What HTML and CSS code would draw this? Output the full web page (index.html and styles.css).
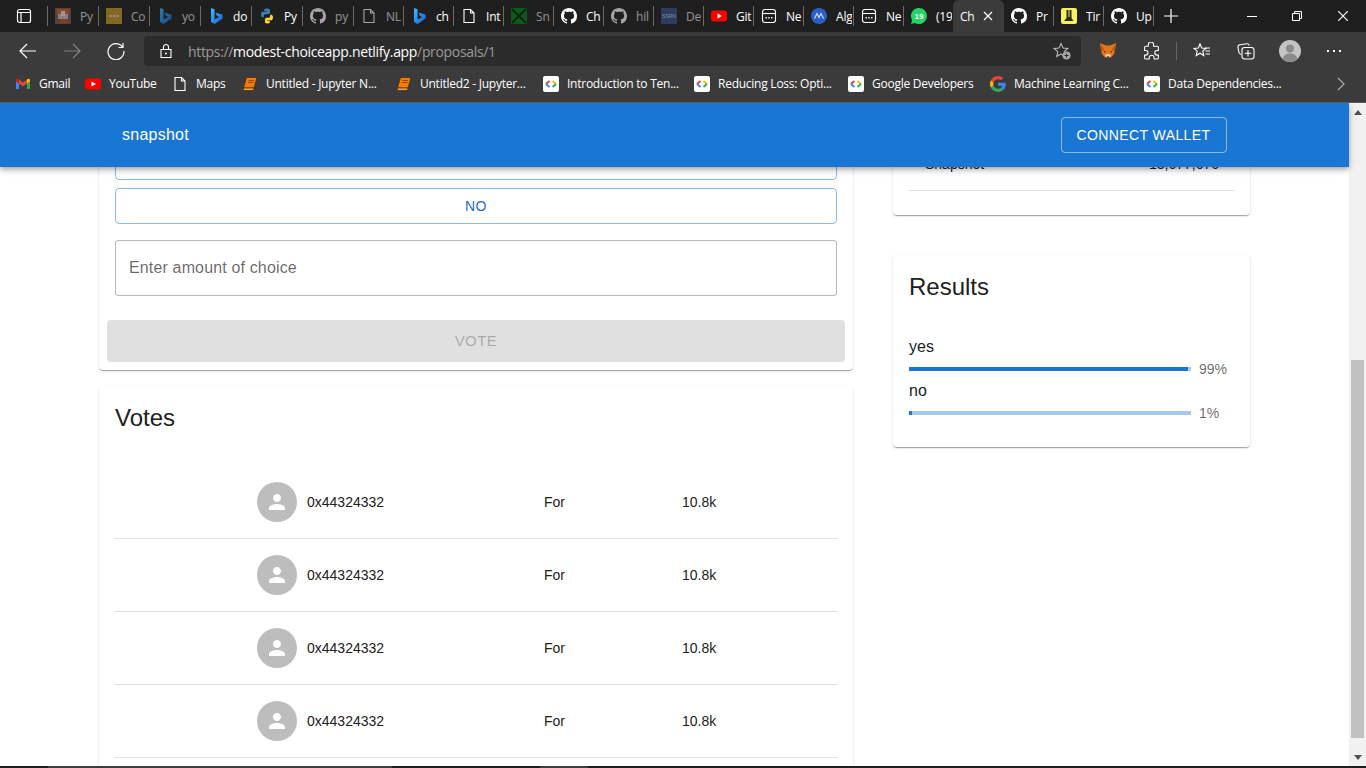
FILE: index.html
```html
<!DOCTYPE html>
<html lang="en">
<head>
    <meta charset="UTF-8">
    <meta name="viewport" content="width=device-width, initial-scale=1.0">
    <title>snapshot</title>
    <link rel="stylesheet" href="styles.css">
</head>
<body>
    <svg class="defs" aria-hidden="true">
        <linearGradient id="bing-fill" x1="0" y1="0" x2="1" y2="1">
            <stop offset="0" stop-color="#37bdff"/>
            <stop offset="1" stop-color="#1b5fd8"/>
        </linearGradient>
        <symbol id="i-github" viewBox="0 0 16 16">
            <path fill="#fff" d="M8 0C3.58 0 0 3.58 0 8c0 3.54 2.29 6.53 5.47 7.59.4.07.55-.17.55-.38 0-.19-.01-.82-.01-1.49-2.01.37-2.53-.49-2.69-.94-.09-.23-.48-.94-.82-1.13-.28-.15-.68-.52-.01-.53.63-.01 1.08.58 1.23.82.72 1.21 1.87.87 2.33.66.07-.52.28-.87.51-1.07-1.78-.2-3.64-.89-3.64-3.95 0-.87.31-1.59.82-2.15-.08-.2-.36-1.02.08-2.12 0 0 .67-.21 2.2.82.64-.18 1.32-.27 2-.27.68 0 1.36.09 2 .27 1.53-1.04 2.2-.82 2.2-.82.44 1.1.16 1.92.08 2.12.51.56.82 1.27.82 2.15 0 3.07-1.87 3.75-3.65 3.95.29.25.54.73.54 1.48 0 1.07-.01 1.93-.01 2.2 0 .21.15.46.55.38A8.013 8.013 0 0016 8c0-4.42-3.58-8-8-8z"/>
        </symbol>
        <symbol id="i-bing" viewBox="0 0 16 16">
            <path fill="url(#bing-fill)" d="M3 0l3.6 1.3v10.2l4.6-2.6-2.2-1-1.4-3.5 7 2.4v3.8L6.6 16 3 14z"/>
        </symbol>
        <symbol id="i-doc" viewBox="0 0 16 16">
            <path fill="none" stroke="#fff" stroke-width="1.1" d="M3 1.5h6.5L13 5v9.5H3zM9.5 1.5V5H13"/>
        </symbol>
        <symbol id="i-page" viewBox="0 0 16 16">
            <rect x="1.5" y="1.5" width="13" height="13" rx="2.5" fill="none" stroke="#fff" stroke-width="1.1"/>
            <path stroke="#fff" stroke-width="1.1" d="M1.5 5.5h13"/>
            <path fill="#fff" d="M4.5 9h1.4v1.4H4.5zM7.3 9h1.4v1.4H7.3zM10.1 9h1.4v1.4h-1.4z"/>
        </symbol>
        <symbol id="i-dev" viewBox="0 0 16 16">
            <rect width="16" height="16" rx="2" fill="#fff"/>
            <path fill="none" stroke="#ea4335" stroke-width="2" d="M6.5 5 3 8"/>
            <path fill="none" stroke="#4285f4" stroke-width="2" d="M3 8l3.5 3"/>
            <path fill="none" stroke="#fbbc04" stroke-width="2" d="M9.5 5 13 8"/>
            <path fill="none" stroke="#34a853" stroke-width="2" d="M13 8l-3.5 3"/>
        </symbol>
        <symbol id="i-book" viewBox="0 0 16 16">
            <path fill="#f57c00" stroke="#3b2a12" stroke-width=".7" d="M4.500 1.500H15L12 12H1.500z"/>
            <path fill="#f9a13a" stroke="#3b2a12" stroke-width=".7" d="M1.500 12H12l-.6 2.500H2.200c-1 0-1-1.500-.7-2.500z"/>
            <path stroke="#7a3d00" stroke-width=".8" d="M6.500 4.500h5.500M6 6.500h5.500"/>
        </symbol>
        <symbol id="i-person" viewBox="0 0 24 24">
            <path fill="#fff" d="M12 12c2.210 0 4-1.790 4-4s-1.790-4-4-4-4 1.790-4 4 1.790 4 4 4zm0 2c-2.670 0-8 1.340-8 4v2h16v-2c0-2.660-5.330-4-8-4z"/>
        </symbol>
    </svg>

    <div class="browser">
        <div class="tabstrip">
            <div class="tab-menu">
                <svg class="icon" viewBox="0 0 16 16"><rect x="1.500" y="1.500" width="13" height="13" rx="2" fill="none" stroke="#fff" stroke-width="1.200"/><path stroke="#fff" stroke-width="1.200" d="M1.500 4.500h13M5 4.500v10"/></svg>
            </div>
            <div class="tab wide dim">
                <svg class="icon" viewBox="0 0 16 16"><rect width="16" height="16" fill="#7a5c4e"/><rect x="2" y="1" width="12" height="5" fill="#d8603c"/><rect x="3" y="6" width="10" height="5" fill="#cfc2b8"/><rect x="5" y="11" width="7" height="4" fill="#c4532f"/><rect x="6" y="3" width="4" height="5" fill="#f2e6d8"/></svg>
                <span class="tab-text">Py</span>
            </div>
            <div class="tab wide dim">
                <svg class="icon" viewBox="0 0 16 16"><rect width="16" height="16" fill="#c69a24"/><path fill="#fff" d="M3.500 7.200h2v1.600h-2zM7 7.200h2v1.600H7zM10.500 7.200h2v1.600h-2z"/></svg>
                <span class="tab-text">Co</span>
            </div>
            <div class="tab wide dim">
                <svg class="icon"><use href="#i-bing"/></svg>
                <span class="tab-text">yo</span>
            </div>
            <div class="tab wide">
                <svg class="icon"><use href="#i-bing"/></svg>
                <span class="tab-text">do</span>
            </div>
            <div class="tab wide">
                <svg class="icon" viewBox="1.500 .5 13 15"><path fill="#3b7fb5" d="M7.900 1C5.200 1 5.400 2.200 5.400 2.200v1.300H8v.4H4.200S2.400 3.700 2.400 6.500s1.600 2.700 1.600 2.700h1V7.900s-.1-1.600 1.600-1.600h2.700s1.500 0 1.500-1.500V2.500S11 1 7.900 1z"/><path fill="#ffd43b" d="M8.100 15c2.700 0 2.500-1.200 2.500-1.200v-1.300H8v-.4h3.800s1.800.2 1.800-2.600-1.600-2.700-1.600-2.700h-1v1.300s.1 1.600-1.600 1.600H7.700s-1.500 0-1.500 1.500v2.300S5 15 8.100 15z"/></svg>
                <span class="tab-text">Py</span>
            </div>
            <div class="tab wide dim">
                <svg class="icon"><use href="#i-github"/></svg>
                <span class="tab-text">py</span>
            </div>
            <div class="tab dim">
                <svg class="icon"><use href="#i-doc"/></svg>
                <span class="tab-text">NL</span>
            </div>
            <div class="tab">
                <svg class="icon"><use href="#i-bing"/></svg>
                <span class="tab-text">ch</span>
            </div>
            <div class="tab">
                <svg class="icon"><use href="#i-doc"/></svg>
                <span class="tab-text">Int</span>
            </div>
            <div class="tab">
                <svg class="icon" viewBox="0 0 16 16"><rect width="16" height="16" fill="#0e5a1b"/><path stroke="#07220c" stroke-width="1.800" d="M1 1l14 14M15 1 1 15"/></svg>
                <span class="tab-text muted">Sn</span>
            </div>
            <div class="tab">
                <svg class="icon"><use href="#i-github"/></svg>
                <span class="tab-text">Ch</span>
            </div>
            <div class="tab dim">
                <svg class="icon"><use href="#i-github"/></svg>
                <span class="tab-text">hil</span>
            </div>
            <div class="tab dim">
                <svg class="icon" viewBox="0 0 16 16"><rect width="16" height="16" fill="#33508c"/><text x="8" y="10" text-anchor="middle" class="ssrn-text">SSRN</text></svg>
                <span class="tab-text">De</span>
            </div>
            <div class="tab">
                <svg class="icon" viewBox="0 0 16 16"><rect y="2.500" width="16" height="11" rx="3" fill="#f00"/><path fill="#fff" d="M6.500 5.500v5L11 8z"/></svg>
                <span class="tab-text">Git</span>
            </div>
            <div class="tab">
                <svg class="icon"><use href="#i-page"/></svg>
                <span class="tab-text">Ne</span>
            </div>
            <div class="tab">
                <svg class="icon" viewBox="0 0 16 16"><circle cx="8" cy="8" r="8" fill="#2a5fc9"/><path fill="none" stroke="#cfe0ff" stroke-width="1.200" d="M3.500 10.500 6 5.500l2 4 2-4 2.500 5"/></svg>
                <span class="tab-text">Alg</span>
            </div>
            <div class="tab">
                <svg class="icon"><use href="#i-page"/></svg>
                <span class="tab-text">Ne</span>
            </div>
            <div class="tab before-active">
                <svg class="icon" viewBox="0 0 16 16"><path fill="#25d366" d="M8 0a8 8 0 0 0-6.800 12.200L0 16l3.900-1.100A8 8 0 1 0 8 0z"/><text x="8" y="11" text-anchor="middle" class="wa-text">19</text></svg>
                <span class="tab-text">(19</span>
            </div>
            <div class="tab-active">
                <span class="tab-text">Ch</span>
                <svg class="tab-close" viewBox="0 0 10 10"><path stroke="#fff" stroke-width="1.200" d="M1 1l8 8M9 1 1 9"/></svg>
            </div>
            <div class="tab">
                <svg class="icon"><use href="#i-github"/></svg>
                <span class="tab-text">Pr</span>
            </div>
            <div class="tab">
                <svg class="icon" viewBox="0 0 16 16"><rect width="16" height="16" rx="2" fill="#f4f25e"/><path fill="#2b2b10" d="M5.500 2h2v7l1 0V2h2v8l2 3H3l2.500-3z"/></svg>
                <span class="tab-text">Tir</span>
            </div>
            <div class="tab">
                <svg class="icon"><use href="#i-github"/></svg>
                <span class="tab-text">Up</span>
            </div>
            <div class="tab-new">
                <svg viewBox="0 0 14 14" class="icon-14"><path stroke="#fff" stroke-width="1.200" d="M7 0v14M0 7h14"/></svg>
            </div>
            <div class="win-controls">
                <div class="win-btn"><svg class="icon-10" viewBox="0 0 10 10"><path stroke="#fff" d="M0 5.500h10"/></svg></div>
                <div class="win-btn"><svg class="icon-10" viewBox="0 0 10 10"><path fill="none" stroke="#fff" d="M.5 2.500h7v7h-7zM2.500 2.500v-2h7v7h-2"/></svg></div>
                <div class="win-btn last"><svg class="icon-10" viewBox="0 0 10 10"><path stroke="#fff" stroke-width="1.100" d="M0 0l10 10M10 0 0 10"/></svg></div>
            </div>
        </div>

        <div class="toolbar">
            <div class="tool-btn">
                <svg class="icon-18" viewBox="0 0 18 18"><path fill="none" stroke="#fff" stroke-width="1.200" d="M17 9H1M8 2 1 9l7 7"/></svg>
            </div>
            <div class="tool-btn off">
                <svg class="icon-18" viewBox="0 0 18 18"><path fill="none" stroke="#fff" stroke-width="1.200" d="M1 9h16M10 2l7 7-7 7"/></svg>
            </div>
            <div class="tool-btn">
                <svg class="icon-18" viewBox="0 0 18 18"><path fill="none" stroke="#fff" stroke-width="1.200" d="M15.500 5A8 8 0 1 0 17 9M16 1v4.500h-4.500"/></svg>
            </div>
            <div class="address">
                <svg class="icon-lock" viewBox="0 0 12 14"><path fill="none" stroke="#fff" stroke-width="1.100" d="M1 5.500h10v8H1zM3.500 5.500V3a2.500 2.500 0 0 1 5 0v2.500"/><circle cx="6" cy="9.500" r="1" fill="#fff"/></svg>
                <span class="url"><span class="url-dim">https://</span>modest-choiceapp.netlify.app<span class="url-dim">/proposals/1</span></span>
                <svg class="icon-star" viewBox="0 0 18 18"><path fill="none" stroke="#bbb" stroke-width="1.100" d="M8 1.500l2 4.500 4.800.5-3.600 3.200 1 4.800L8 12l-4.200 2.500 1-4.800L1.200 6.500 6 6z"/><circle cx="13.500" cy="13.500" r="4" fill="#aaa"/><path stroke="#2b2b2b" d="M13.500 11.500v4M11.500 13.500h4"/></svg>
            </div>
            <div class="tool-end">
                <div class="tool-btn">
                    <svg class="icon-18" viewBox="0 0 20 18"><path fill="#e2761b" d="M1 0l7 3h4l7-3-1.500 9L17 12l-3.500 4H6.500L3 12l-.5-3z"/><path fill="#c0560f" d="M1 0l5 8-3.500 1zM19 0l-5 8 3.500 1z"/><path fill="#f6c9a0" d="M6.500 13.500 10 12l3.500 1.500-1.500 3H8z"/><path fill="#2b1a10" d="M8.500 15h3v1.500h-3zM5 9l2.500.5-1 1.500zM15 9l-2.500.5 1 1.500z"/></svg>
                </div>
                <div class="tool-btn">
                    <svg class="icon-18" viewBox="2 1 17 17"><path fill="none" stroke="#fff" stroke-width="1" d="M7 3.500a2.500 2.500 0 0 1 5 0V5h3.500a1 1 0 0 1 1 1v3h-1.200a2.200 2.200 0 0 0 0 4.400h1.200v2.600a1 1 0 0 1-1 1h-3v-1.200a2.300 2.300 0 0 0-4.600 0V17H4.500a1 1 0 0 1-1-1v-2.600h1a2.200 2.200 0 0 0 0-4.400h-1V6a1 1 0 0 1 1-1H7z"/></svg>
                </div>
                <div class="tool-sep"></div>
                <div class="tool-btn">
                    <svg class="icon-18" viewBox="0 0 18 18"><path fill="none" stroke="#fff" stroke-width="1.100" d="M7 2l1.700 4 4.300.4-3.200 2.800 1 4.300L7 11.200l-3.800 2.300 1-4.300L1 6.400l4.300-.4z"/><path stroke="#fff" stroke-width="1.100" d="M12 6h5M12.500 9h4.500M12.500 12H17"/></svg>
                </div>
                <div class="tool-btn">
                    <svg class="icon-18" viewBox="0 0 18 18"><path fill="none" stroke="#fff" stroke-width="1.100" d="M4 12.500C2.500 12 2 11 1.800 10L1 5.500C.8 4 1.500 3 3 2.800l7-1c1.200-.1 2 .5 2.300 1.700"/><rect x="5" y="5.500" width="12" height="11.500" rx="2.500" fill="none" stroke="#fff" stroke-width="1.100"/><path stroke="#fff" stroke-width="1.100" d="M11 8v6.500M7.800 11.200h6.500"/></svg>
                </div>
                <div class="tool-btn">
                    <svg class="avatar-small" viewBox="0 0 22 22"><circle cx="11" cy="11" r="11" fill="#c4c4c4"/><circle cx="11" cy="8.500" r="4" fill="#8b8b8b"/><path fill="#8b8b8b" d="M3.500 19c1-4 4-5.500 7.500-5.500s6.500 1.500 7.500 5.500A11 11 0 0 1 11 22a11 11 0 0 1-7.500-3z"/></svg>
                </div>
                <div class="tool-btn">
                    <svg class="icon-18" viewBox="0 0 18 18"><path fill="#fff" d="M2 8h2v2H2zM8 8h2v2H8zM14 8h2v2h-2z"/></svg>
                </div>
            </div>
        </div>

        <div class="bookmarks">
            <div class="bm">
                <svg class="icon" viewBox="0 0 16 16"><path fill="#4285f4" d="M1 13h3V7.500L1 5z"/><path fill="#34a853" d="M12 13h3V5l-3 2.500z"/><path fill="#ea4335" d="M4 7.500l4 3 4-3v-4l-4 3-4-3z"/><path fill="#fbbc04" d="M12 3.500v4l3-2.300v-1c0-1.200-1.400-1.900-2.400-1.100z"/><path fill="#c5221f" d="M1 5.200v-1c0-1.200 1.400-1.900 2.400-1.100l.6.400v4z"/></svg>
                <span>Gmail</span>
            </div>
            <div class="bm">
                <svg class="icon" viewBox="0 0 16 16"><rect y="2.500" width="16" height="11" rx="3" fill="#f00"/><path fill="#fff" d="M6.500 5.500v5L11 8z"/></svg>
                <span>YouTube</span>
            </div>
            <div class="bm">
                <svg class="icon"><use href="#i-doc"/></svg>
                <span>Maps</span>
            </div>
            <div class="bm">
                <svg class="icon"><use href="#i-book"/></svg>
                <span>Untitled - Jupyter N...</span>
            </div>
            <div class="bm">
                <svg class="icon"><use href="#i-book"/></svg>
                <span>Untitled2 - Jupyter...</span>
            </div>
            <div class="bm">
                <svg class="icon"><use href="#i-dev"/></svg>
                <span>Introduction to Ten...</span>
            </div>
            <div class="bm">
                <svg class="icon"><use href="#i-dev"/></svg>
                <span>Reducing Loss: Opti...</span>
            </div>
            <div class="bm">
                <svg class="icon"><use href="#i-dev"/></svg>
                <span>Google Developers</span>
            </div>
            <div class="bm">
                <svg class="icon" viewBox="0 0 48 48"><path fill="#ea4335" d="M24 9.500c3.540 0 6.710 1.220 9.210 3.600l6.850-6.850C35.900 2.380 30.470 0 24 0 14.620 0 6.510 5.380 2.560 13.220l7.980 6.190C12.430 13.720 17.740 9.500 24 9.500z"/><path fill="#4285f4" d="M46.980 24.550c0-1.570-.15-3.090-.38-4.550H24v9.020h12.940c-.58 2.960-2.260 5.480-4.780 7.180l7.730 6c4.510-4.180 7.090-10.360 7.090-17.650z"/><path fill="#fbbc05" d="M10.530 28.590c-.48-1.450-.76-2.990-.76-4.590s.27-3.140.76-4.590l-7.980-6.190C.92 16.460 0 20.120 0 24c0 3.880.92 7.540 2.560 10.780l7.970-6.190z"/><path fill="#34a853" d="M24 48c6.480 0 11.930-2.130 15.890-5.810l-7.730-6c-2.150 1.450-4.920 2.300-8.160 2.300-6.260 0-11.570-4.220-13.470-9.910l-7.980 6.190C6.510 42.620 14.620 48 24 48z"/></svg>
                <span>Machine Learning C...</span>
            </div>
            <div class="bm">
                <svg class="icon"><use href="#i-dev"/></svg>
                <span>Data Dependencies...</span>
            </div>
            <svg class="bm-more" viewBox="0 0 8 14"><path fill="none" stroke="#aaa" stroke-width="1.200" d="M1 1l6 6-6 6"/></svg>
        </div>
    </div>

    <div class="viewport">
        <div class="page">
            <header class="appbar">
                <span class="brand">snapshot</span>
                <button class="connect">Connect Wallet</button>
            </header>

            <main class="content">
                <div class="col-left">
                    <section class="card vote-card">
                        <div class="choices">
                            <button class="choice">Yes</button>
                            <button class="choice">No</button>
                            <input class="amount" type="text" placeholder="Enter amount of choice">
                        </div>
                        <div class="vote-actions">
                            <button class="vote" disabled>Vote</button>
                        </div>
                    </section>

                    <section class="card votes-card">
                        <h2 class="card-title">Votes</h2>
                        <div class="votes-list">
                            <div class="vote-row">
                                <div class="voter">
                                    <span class="avatar"><svg class="icon-24"><use href="#i-person"/></svg></span>
                                    <span>0x44324332</span>
                                </div>
                                <span>For</span>
                                <span>10.8k</span>
                            </div>
                            <div class="vote-row">
                                <div class="voter">
                                    <span class="avatar"><svg class="icon-24"><use href="#i-person"/></svg></span>
                                    <span>0x44324332</span>
                                </div>
                                <span>For</span>
                                <span>10.8k</span>
                            </div>
                            <div class="vote-row">
                                <div class="voter">
                                    <span class="avatar"><svg class="icon-24"><use href="#i-person"/></svg></span>
                                    <span>0x44324332</span>
                                </div>
                                <span>For</span>
                                <span>10.8k</span>
                            </div>
                            <div class="vote-row">
                                <div class="voter">
                                    <span class="avatar"><svg class="icon-24"><use href="#i-person"/></svg></span>
                                    <span>0x44324332</span>
                                </div>
                                <span>For</span>
                                <span>10.8k</span>
                            </div>
                        </div>
                    </section>
                </div>

                <div class="col-right">
                    <section class="card info-card">
                        <div class="info-row">
                            <span>Snapshot</span>
                            <span>13,677,676</span>
                        </div>
                    </section>

                    <section class="card results-card">
                        <h2 class="card-title">Results</h2>
                        <div class="results">
                            <div class="result-label">yes</div>
                            <div class="result-row">
                                <div class="bar"><div class="bar-fill" style="width: 99%"></div></div>
                                <span class="percent">99%</span>
                            </div>
                            <div class="result-label">no</div>
                            <div class="result-row">
                                <div class="bar"><div class="bar-fill" style="width: 1%"></div></div>
                                <span class="percent">1%</span>
                            </div>
                        </div>
                    </section>
                </div>
            </main>
        </div>

        <div class="scrollbar">
            <svg class="arrow" viewBox="0 0 8 5"><path fill="#505050" d="M4 0l4 5H0z"/></svg>
            <div class="thumb"></div>
            <svg class="arrow" viewBox="0 0 8 5"><path fill="#505050" d="M4 5l4-5H0z"/></svg>
        </div>
    </div>

    <div class="taskbar">
        <div class="task-gap"></div>
        <div class="task-open"></div>
        <div class="task-gap-2"></div>
        <div class="task-active"></div>
    </div>
</body>
</html>
```

FILE: styles.css
```css
* {
    box-sizing: border-box;
}

html, body {
    margin: 0;
    height: 768px;
    overflow: hidden;
}

body {
    display: flex;
    flex-direction: column;
    font-family: "Liberation Sans", Arial, sans-serif;
    color: #212121;
    background-color: #fff;
}

.defs {
    position: absolute;
    width: 0;
    height: 0;
}

/* browser chrome */

.browser {
    flex: none;
    height: 103px;
    font-family: "Open Sans", "Noto Sans", sans-serif;
    font-size: 12px;
    color: #fff;
    background-color: #3b3b3b;
    border-bottom: 1px solid #5a5a5a;
}

.tabstrip {
    display: flex;
    height: 32px;
    background-color: #1f1f1f;
}

.tab-menu {
    position: relative;
    width: 48px;
    display: flex;
    align-items: center;
    padding-left: 16px;
}

.icon {
    flex: none;
    width: 16px;
    height: 16px;
}

.icon-10 {
    width: 10px;
    height: 10px;
}

.icon-14 {
    width: 14px;
    height: 14px;
}

.icon-18 {
    width: 18px;
    height: 18px;
}

.icon-24 {
    width: 24px;
    height: 24px;
}

.tab {
    position: relative;
    width: 50px;
    display: flex;
    align-items: center;
    gap: 9px;
    padding-left: 7px;
}

.tab.wide {
    width: 51px;
}

.tab.before-active {
    width: 49px;
}

/* separator between tabs */
.tab::after,
.tab-menu::after {
    content: "";
    position: absolute;
    right: 0;
    top: 6px;
    height: 20px;
    width: 1px;
    background-color: #6a6a6a;
}

.tab.before-active::after {
    display: none;
}

.tab.dim .icon {
    opacity: 0.6;
}

.tab.dim .tab-text,
.tab-text.muted {
    opacity: 0.5;
}

.tab-text {
    width: 16px;
    overflow: hidden;
    white-space: nowrap;
    font-size: 12px;
    letter-spacing: -0.2px;
}

.ssrn-text {
    font-family: "Liberation Sans", sans-serif;
    font-size: 5px;
    fill: #c8d2e8;
}

.wa-text {
    font-family: "Liberation Sans", sans-serif;
    font-size: 8px;
    font-weight: bold;
    fill: #fff;
}

.tab-active {
    width: 51px;
    display: flex;
    align-items: center;
    padding-left: 7px;
    background-color: #3b3b3b;
    border-radius: 6px 6px 0 0;
}

.tab-close {
    width: 10px;
    height: 10px;
    margin-left: 7px;
}

.tab-new {
    width: 34px;
    display: flex;
    align-items: center;
    justify-content: center;
}

.win-controls {
    display: flex;
    margin-left: auto;
}

.win-btn {
    width: 45px;
    display: flex;
    align-items: center;
    justify-content: center;
}

.win-btn.last {
    width: 47px;
}

.toolbar {
    display: flex;
    align-items: center;
    height: 36px;
    padding: 2px 0 0 6px;
}

.tool-btn {
    width: 44px;
    height: 30px;
    display: flex;
    align-items: center;
    justify-content: center;
}

.tool-btn.off {
    opacity: 0.35;
}

.address {
    width: 937px;
    height: 30px;
    display: flex;
    align-items: center;
    padding-left: 16px;
    margin-left: 6px;
    background-color: #2b2b2b;
    border-radius: 4px;
}

.icon-lock {
    width: 12px;
    height: 14px;
}

.url {
    margin-left: 16px;
    font-size: 14px;
    letter-spacing: -0.33px;
    white-space: nowrap;
}

.url-dim {
    color: #9a9a9a;
}

.icon-star {
    width: 18px;
    height: 18px;
    margin-left: auto;
    margin-right: 10px;
}

.tool-end {
    display: flex;
    align-items: center;
    margin-left: 5px;
}

.tool-sep {
    width: 1px;
    height: 18px;
    margin: 0 3px 0 2px;
    background-color: #666;
}

.avatar-small {
    width: 22px;
    height: 22px;
}

.bookmarks {
    display: grid;
    grid-template-columns: 70px 87px 70px 154px 147px 151px 154px 142px 154px 193px 1fr;
    align-items: center;
    height: 32px;
    padding-left: 15px;
}

.bm {
    display: flex;
    align-items: center;
    gap: 8px;
    white-space: nowrap;
    letter-spacing: -0.25px;
}

.bm span {
    padding-bottom: 2px;
}

.bm-more {
    width: 8px;
    height: 14px;
}

/* page */

.viewport {
    flex: 1;
    min-height: 0;
    display: flex;
    overflow: hidden;
}

.page {
    flex: 1;
    min-width: 0;
}

.appbar {
    position: relative;
    z-index: 2;
    height: 64px;
    display: flex;
    align-items: center;
    justify-content: space-between;
    padding: 0 122px;
    color: #fff;
    background-color: #1976d2;
    box-shadow: 0 2px 4px -1px rgba(0, 0, 0, 0.2), 0 4px 5px 0 rgba(0, 0, 0, 0.14), 0 1px 10px 0 rgba(0, 0, 0, 0.12);
}

.brand {
    font-size: 16px;
    letter-spacing: 0.25px;
}

button {
    font-family: inherit;
    text-transform: uppercase;
    letter-spacing: 0.4px;
    font-size: 14px;
    border-radius: 4px;
    background: none;
}

.connect {
    width: 166px;
    height: 36px;
    padding: 0 1px 0 0;
    color: #fff;
    border: 1px solid rgba(255, 255, 255, 0.5);
}

/* the page is scrolled, its top runs under the app bar */
.content {
    display: grid;
    grid-template-columns: 754px 357px;
    gap: 40px;
    margin-top: -47px;
    padding-left: 99px;
}

.card {
    background-color: #fff;
    border-radius: 4px;
    box-shadow: 0 2px 1px -1px rgba(0, 0, 0, 0.2), 0 1px 1px 0 rgba(0, 0, 0, 0.14), 0 1px 3px 0 rgba(0, 0, 0, 0.12);
}

.choices {
    display: flex;
    flex-direction: column;
    padding: 24px 16px 0;
}

.choice {
    height: 36px;
    margin-bottom: 8px;
    color: #2569c4;
    border: 1px solid rgba(25, 118, 210, 0.5);
}

.amount {
    height: 56px;
    margin-top: 8px;
    padding: 0 13px;
    font-family: inherit;
    font-size: 16px;
    letter-spacing: 0.15px;
    border: 1px solid rgba(0, 0, 0, 0.28);
    border-radius: 4px;
}

.amount::placeholder {
    color: rgba(0, 0, 0, 0.6);
    opacity: 1;
}

.vote-actions {
    padding: 24px 8px 8px;
}

.vote {
    display: block;
    width: 100%;
    height: 42px;
    padding: 0 0 2px;
    font-size: 15px;
    letter-spacing: 0.46px;
    color: rgba(0, 0, 0, 0.26);
    background-color: #e0e0e0;
    border: 0;
}

.votes-card {
    margin-top: 16px;
    padding: 16px 16px 40px;
}

.card-title {
    margin: 0;
    font-size: 24px;
    font-weight: 400;
    line-height: 32px;
}

.votes-list {
    margin-top: 32px;
}

.vote-row {
    display: grid;
    grid-template-columns: 287px 138px 1fr;
    align-items: center;
    height: 73px;
    padding-left: 142px;
    font-size: 14px;
    border-bottom: 1px solid #e0e0e0;
}

.voter {
    display: flex;
    align-items: center;
    gap: 10px;
}

.avatar {
    width: 40px;
    height: 40px;
    display: flex;
    align-items: center;
    justify-content: center;
    border-radius: 50%;
    background-color: #bdbdbd;
}

.info-card {
    padding: 34px 16px 24px;
}

.info-row {
    display: flex;
    justify-content: space-between;
    height: 37px;
    padding: 0 15px 0 16px;
    font-size: 14px;
    line-height: 20px;
    border-bottom: 1px solid #e0e0e0;
}

.results-card {
    margin-top: 40px;
    padding: 16px 16px 24px;
}

.results {
    margin-top: 32px;
}

.result-label {
    font-size: 16px;
    line-height: 24px;
}

.result-row {
    display: flex;
    align-items: center;
    gap: 8px;
    height: 20px;
}

.bar {
    flex: 1;
    height: 4px;
    background-color: #a6c8ec;
}

.bar-fill {
    height: 100%;
    background-color: #1976d2;
}

.percent {
    width: 35px;
    font-size: 14px;
    line-height: 20px;
    color: rgba(0, 0, 0, 0.6);
}

/* scrollbar of the window */

.scrollbar {
    flex: none;
    width: 17px;
    display: flex;
    flex-direction: column;
    align-items: center;
    padding: 7px 0 6px;
    background-color: #f1f1f1;
}

.arrow {
    width: 8px;
    height: 5px;
    flex: none;
}

.thumb {
    width: 13px;
    height: 379px;
    margin-top: 245px;
    margin-bottom: 17px;
    background-color: #c1c1c1;
}

.taskbar {
    flex: none;
    height: 2px;
    display: flex;
    background-color: #1f1f1f;
}

.task-gap {
    width: 48px;
}

.task-open {
    width: 344px;
    background-color: #3d3d3d;
}

.task-gap-2 {
    width: 148px;
}

.task-active {
    width: 48px;
    background-color: #3d3d3d;
}
```
